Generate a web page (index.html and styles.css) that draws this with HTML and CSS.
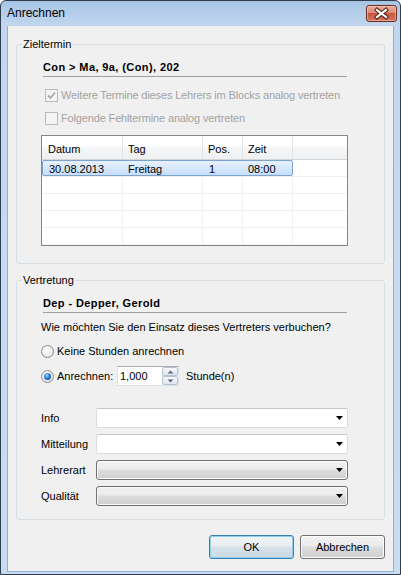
FILE: index.html
```html
<!DOCTYPE html>
<html>
<head>
<meta charset="utf-8">
<title>Anrechnen</title>
<link rel="stylesheet" href="styles.css">
</head>
<body>
<div class="window">
  <div class="titlebar">
    <span class="title">Anrechnen</span>
    <div class="close">
      <svg width="29" height="15" viewBox="0 0 29 15">
        <path d="M10 4 L19 11 M19 4 L10 11" stroke="#5a2218" stroke-width="4.2" stroke-linecap="square" fill="none"/>
        <path d="M10 4 L19 11 M19 4 L10 11" stroke="#ffffff" stroke-width="2.2" stroke-linecap="square" fill="none"/>
      </svg>
    </div>
  </div>
  <div class="client">
    <fieldset class="group">
      <legend>Zieltermin</legend>
      <div class="group-body body-target">
        <div class="heading">Con &gt; Ma, 9a, (Con), 202</div>
        <div class="check disabled first">
          <span class="box"><svg width="11" height="11" viewBox="0 0 11 11"><path d="M2 5.5 L4.5 8 L9 2.5" stroke="#a8a8a8" stroke-width="1.8" fill="none"/></svg></span>
          <span class="check-text">Weitere Termine dieses Lehrers im Blocks analog vertreten</span>
        </div>
        <div class="check disabled second">
          <span class="box"></span>
          <span class="check-text">Folgende Fehltermine analog vertreten</span>
        </div>
        <div class="list">
          <div class="list-head">
            <div class="hcell c1">Datum</div>
            <div class="hcell c2">Tag</div>
            <div class="hcell c3">Pos.</div>
            <div class="hcell c4">Zeit</div>
            <div class="hcell c5"></div>
          </div>
          <div class="list-row">
            <div class="sel">
              <div class="cell s1">30.08.2013</div>
              <div class="cell s2">Freitag</div>
              <div class="cell s3">1</div>
              <div class="cell s4">08:00</div>
            </div>
            <div class="cell c5"></div>
          </div>
          <div class="list-row"><div class="cell c1"></div><div class="cell c2"></div><div class="cell c3"></div><div class="cell c4"></div><div class="cell c5"></div></div>
          <div class="list-row"><div class="cell c1"></div><div class="cell c2"></div><div class="cell c3"></div><div class="cell c4"></div><div class="cell c5"></div></div>
          <div class="list-row"><div class="cell c1"></div><div class="cell c2"></div><div class="cell c3"></div><div class="cell c4"></div><div class="cell c5"></div></div>
          <div class="list-row"><div class="cell c1"></div><div class="cell c2"></div><div class="cell c3"></div><div class="cell c4"></div><div class="cell c5"></div></div>
        </div>
      </div>
    </fieldset>

    <fieldset class="group group-sub">
      <legend>Vertretung</legend>
      <div class="group-body body-sub">
        <div class="heading">Dep - Depper, Gerold</div>
        <div class="question">Wie möchten Sie den Einsatz dieses Vertreters verbuchen?</div>
        <div class="radio-row r1">
          <span class="radio"></span>
          <span>Keine Stunden anrechnen</span>
        </div>
        <div class="radio-row r2">
          <span class="radio on"><span class="dot"></span></span>
          <span class="anr-label">Anrechnen:</span>
          <div class="spinner">
            <span class="spin-value">1,000</span>
            <div class="spin-buttons">
              <span class="spin-btn"><svg width="7" height="4" viewBox="0 0 7 4"><path d="M0.5 3.5 L3.5 0.5 L6.5 3.5 Z" fill="#566b8a"/></svg></span>
              <span class="spin-btn"><svg width="7" height="4" viewBox="0 0 7 4"><path d="M0.5 0.5 L3.5 3.5 L6.5 0.5 Z" fill="#566b8a"/></svg></span>
            </div>
          </div>
          <span class="unit">Stunde(n)</span>
        </div>
        <div class="fields">
          <div class="field">
            <span class="field-label">Info</span>
            <div class="combo edit"><svg class="arrow" width="7" height="4" viewBox="0 0 7 4"><path d="M0 0 H7 L3.5 4 Z" fill="#000"/></svg></div>
          </div>
          <div class="field">
            <span class="field-label">Mitteilung</span>
            <div class="combo edit"><svg class="arrow" width="7" height="4" viewBox="0 0 7 4"><path d="M0 0 H7 L3.5 4 Z" fill="#000"/></svg></div>
          </div>
          <div class="field">
            <span class="field-label">Lehrerart</span>
            <div class="combo list-combo"><svg class="arrow" width="7" height="4" viewBox="0 0 7 4"><path d="M0 0 H7 L3.5 4 Z" fill="#000"/></svg></div>
          </div>
          <div class="field">
            <span class="field-label">Qualität</span>
            <div class="combo list-combo"><svg class="arrow" width="7" height="4" viewBox="0 0 7 4"><path d="M0 0 H7 L3.5 4 Z" fill="#000"/></svg></div>
          </div>
        </div>
      </div>
    </fieldset>

    <div class="buttons">
      <div class="btn default">OK</div>
      <div class="btn">Abbrechen</div>
    </div>
  </div>
</div>
</body>
</html>
```

FILE: styles.css
```css
* { box-sizing: border-box; }
html, body { margin: 0; padding: 0; }
body {
  width: 401px;
  height: 575px;
  overflow: hidden;
  background: #ffffff;
  font-family: "Liberation Sans", Arial, sans-serif;
  font-size: 11px;
  color: #000;
}

.window {
  width: 401px;
  height: 575px;
  border: 1px solid #2e3d50;
  border-radius: 6px 6px 0 0;
  background: linear-gradient(#a8c4e4 0, #c2d7ef 25px, #cadcf1 100%);
  display: flex;
  flex-direction: column;
}

.titlebar {
  height: 25px;
  flex: none;
  display: flex;
  align-items: center;
  justify-content: space-between;
  padding: 0 3px 0 6px;
}
.title { font-size: 12px; line-height: 15px; color: #000; }

.close {
  width: 31px;
  height: 17px;
  border: 1px solid #6b2a20;
  border-radius: 3px;
  background: linear-gradient(#e9ab99 0, #dc8b76 45%, #c7573e 50%, #d4745a 100%);
  box-shadow: inset 0 0 0 1px rgba(255, 220, 210, 0.5);
  display: flex;
}

.client {
  flex: 1;
  margin: 0 6px 2px;
  border: 1px solid #8fb0d6;
  border-top: 0;
  background: #f0f0f0;
  padding: 11px 8px 0;
  display: flex;
  flex-direction: column;
}

fieldset.group {
  margin: 0;
  padding: 0 5px;
  min-width: 0;
  flex: none;
  border: 1px solid #d5dfe5;
  border-radius: 3px;
}
.group legend {
  padding: 0 1px;
  line-height: 14px;
}
fieldset.group-sub { margin-top: 9px; }

.group-body { padding: 0 31px 0 19px; }
.body-target { padding-bottom: 17px; }
.body-sub { padding-bottom: 13px; }

.heading {
  margin: 10px 1px 0 2px;
  font-weight: bold;
  letter-spacing: 0.4px;
  line-height: 13px;
  padding-bottom: 2px;
  border-bottom: 1px solid #a0a0a0;
}

.check {
  display: flex;
  align-items: center;
  gap: 3px;
  height: 13px;
  line-height: 13px;
  margin-left: 4px;
  white-space: nowrap;
}
.check-text { letter-spacing: -0.15px; }
.check.first { margin-top: 12px; }
.check.second { margin-top: 10px; }
.check.disabled { color: #a3a3a3; }
.box {
  width: 13px;
  height: 13px;
  flex: none;
  border: 1px solid #bababa;
  background: #f4f4f4;
  display: flex;
}

.list {
  margin-top: 10px;
  height: 111px;
  border: 1px solid #828790;
  background: #fff;
  overflow: hidden;
}
.list-head {
  display: flex;
  height: 24px;
  border-bottom: 1px solid #d5d5d5;
  background: linear-gradient(#ffffff 0, #ffffff 40%, #f4f5f7 55%, #eff0f2 100%);
}
.hcell {
  border-right: 1px solid #e2e3e5;
  padding: 3px 0 0 5px;
  line-height: 20px;
}
.c1 { width: 81px; padding-left: 6px; }
.c2 { width: 80px; }
.c3 { width: 40px; }
.c4 { width: 50px; }
.c5 { flex: 1; border-right: 0; }

.list-row {
  display: flex;
  height: 17px;
  border-bottom: 1px solid #f0f0f0;
}
.cell {
  flex: none;
  border-right: 1px solid #f0f0f0;
  padding-left: 5px;
  line-height: 16px;
}
.cell.c5 { flex: 1; border-right: 0; }

.sel {
  display: flex;
  width: 251px;
  height: 16px;
  border: 1px solid #7da2ce;
  border-radius: 2px;
  background: linear-gradient(#e8f1fd, #c6defb);
}
.sel .cell { border-right: 0; line-height: 14px; padding-top: 1px; }
.s1 { width: 80px; padding-left: 6px; }
.s2 { width: 80px; }
.s3 { width: 40px; padding-left: 6px; }
.s4 { width: 49px; }

.question { margin-top: 8px; line-height: 13px; }

.radio-row {
  display: flex;
  align-items: center;
  gap: 3px;
}
.radio-row.r1 { margin-top: 11px; height: 13px; line-height: 13px; }
.radio-row.r2 { margin-top: 8px; height: 20px; }
.radio {
  width: 13px;
  height: 13px;
  flex: none;
  border-radius: 50%;
  border: 1px solid #8d8d8d;
  background: radial-gradient(circle at 45% 40%, #ffffff 0, #ececec 55%, #d2d2d2 100%);
  display: flex;
  align-items: center;
  justify-content: center;
}
.dot {
  width: 7px;
  height: 7px;
  border-radius: 50%;
  background: radial-gradient(circle at 40% 35%, #9ad7ff 0, #2d7fcf 45%, #0d3f7c 100%);
}
.anr-label { width: 57px; }
.spinner {
  width: 62px;
  height: 20px;
  flex: none;
  border: 1px solid #dbdfe6;
  border-top-color: #abadb3;
  background: #fff;
  display: flex;
}
.spin-value { padding-left: 2px; line-height: 18px; }
.spin-buttons {
  margin-left: auto;
  width: 16px;
  display: flex;
  flex-direction: column;
}
.spin-btn {
  height: 9px;
  border: 1px solid #b6c1cf;
  border-radius: 2px;
  background: linear-gradient(#f5f8fb, #dfe6ee);
  display: flex;
  align-items: center;
  justify-content: center;
}
.unit { margin-left: 4px; }

.fields {
  margin-top: 22px;
  display: flex;
  flex-direction: column;
  gap: 6px;
}
.field {
  display: flex;
  align-items: center;
  height: 20px;
}
.field-label { width: 55px; flex: none; }
.combo {
  flex: 1;
  height: 20px;
  display: flex;
  align-items: center;
  justify-content: flex-end;
  padding-right: 4px;
}
.combo.edit {
  background: #fff;
  border: 1px solid #dcdcdc;
  border-top-color: #c8c8c8;
  border-radius: 2px;
}
.combo.list-combo {
  border: 1px solid #707070;
  border-radius: 3px;
  background: linear-gradient(#f2f2f2 0, #ebebeb 45%, #dddddd 50%, #cfcfcf 100%);
  box-shadow: inset 0 0 0 1px #fbfbfb;
}

.buttons {
  display: flex;
  justify-content: flex-end;
  gap: 6px;
  margin-top: 15px;
}
.btn {
  width: 85px;
  height: 24px;
  border: 1px solid #707070;
  border-radius: 3px;
  background: linear-gradient(#f2f2f2 0, #ebebeb 45%, #dddddd 50%, #cfcfcf 100%);
  box-shadow: inset 0 0 0 1px #fcfcfc;
  display: flex;
  align-items: center;
  justify-content: center;
}
.btn.default {
  border-color: #3c7fb1;
  box-shadow: inset 0 0 0 1px #8fd0f2;
  background: linear-gradient(#f0f4f7 0, #e8eef2 45%, #d8e2ea 50%, #cbd8e2 100%);
}
```
